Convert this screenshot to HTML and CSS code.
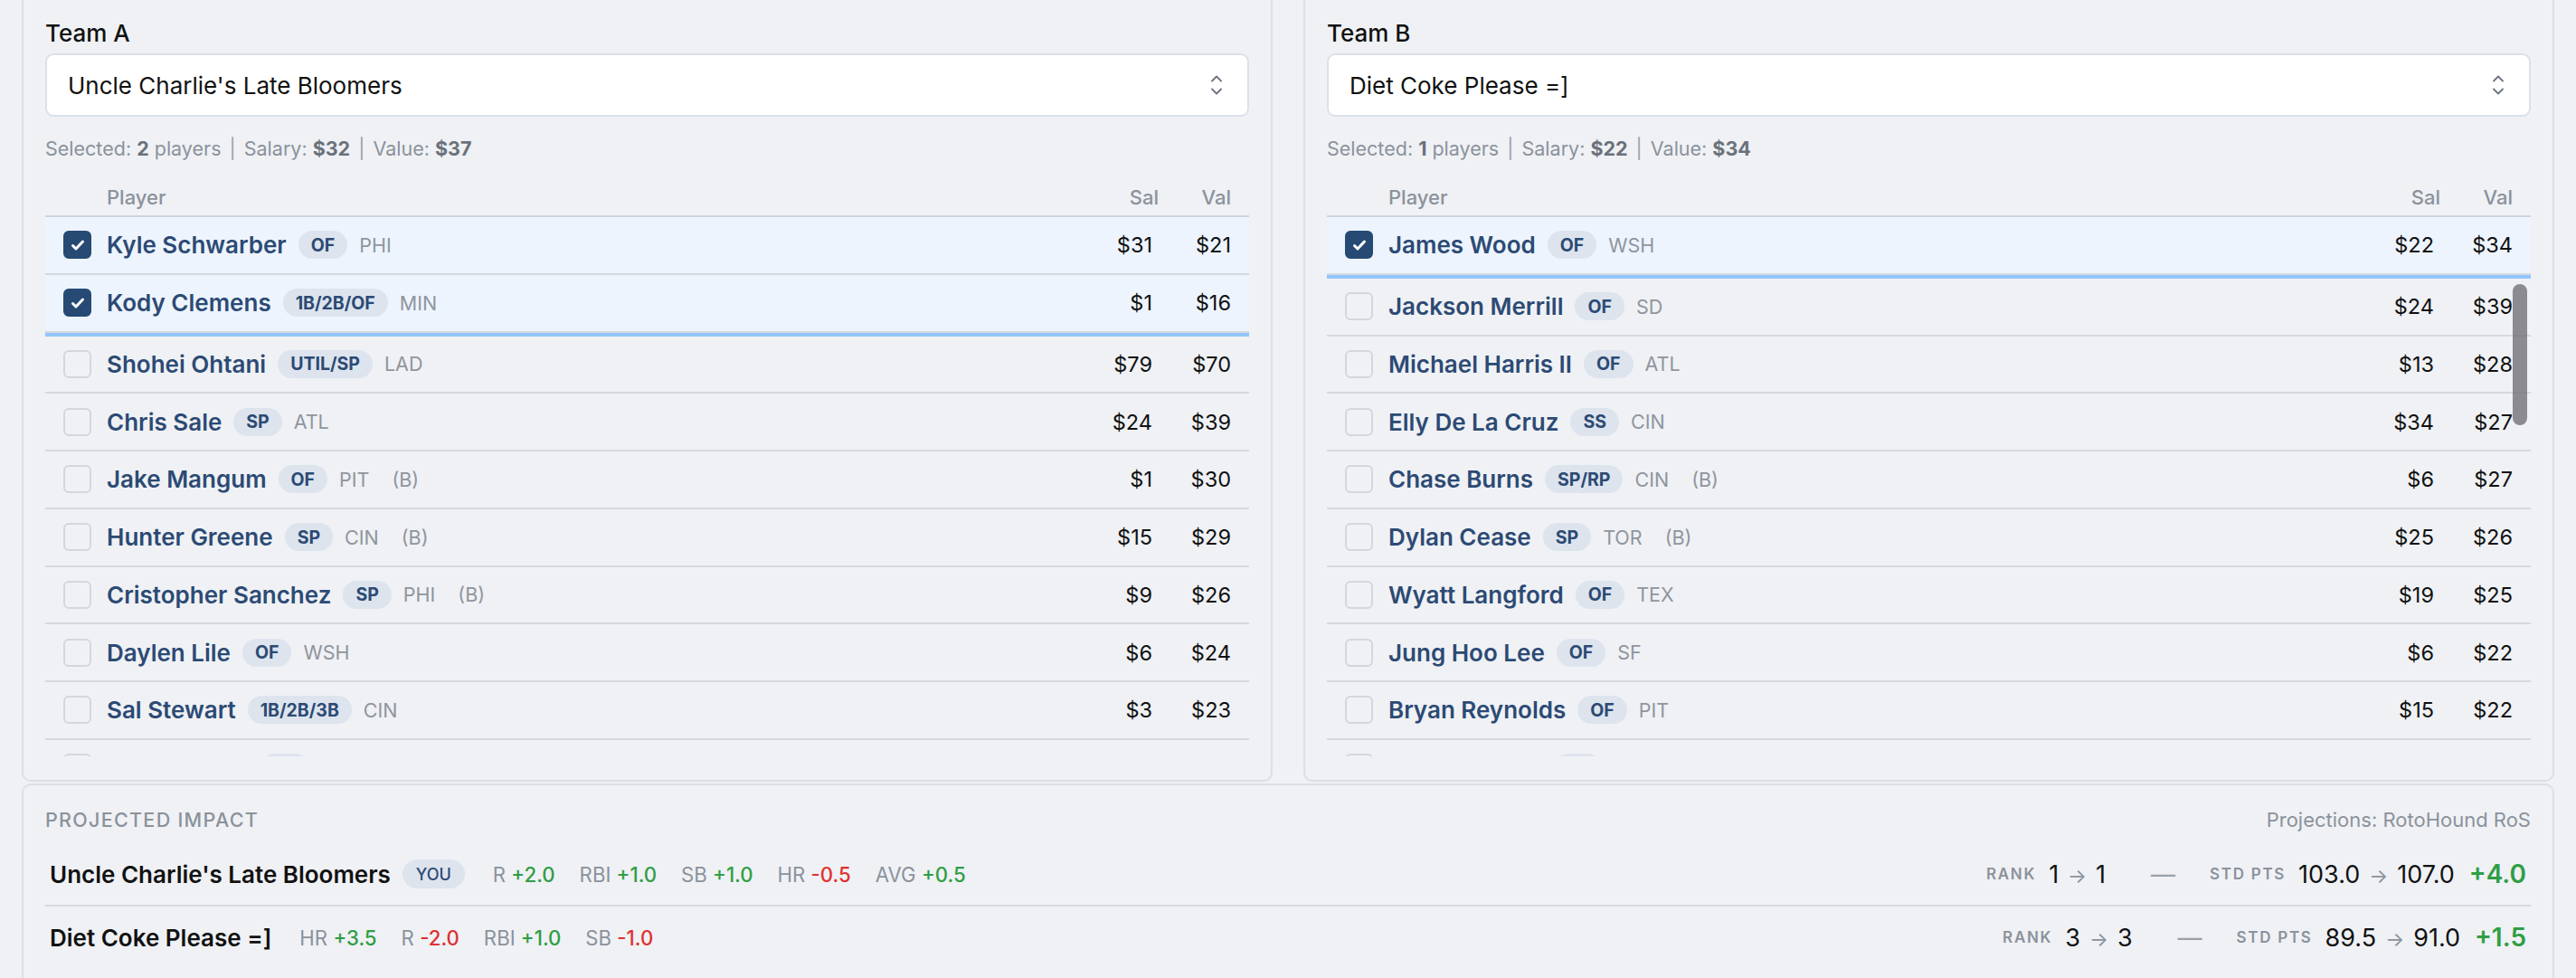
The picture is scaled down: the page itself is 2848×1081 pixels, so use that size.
FILE: index.html
```html
<!DOCTYPE html>
<html lang="en">
<head>
    <meta charset="UTF-8">
    <meta name="viewport" content="width=device-width, initial-scale=1.0">
    <title>Trade Analyzer</title>
    <link rel="stylesheet" href="styles.css">
</head>
<body>
<div class="page">
    <div class="teams">
        <!-- Team A -->
        <section class="team-card">
            <div class="team-label">Team A</div>
            <div class="team-select">
                <span>Uncle Charlie's Late Bloomers</span>
                <svg class="chev" width="12" height="22" viewBox="0 0 12 22"><path d="M1 6.5 6 1.5l5 5M1 15.5l5 5 5-5" fill="none" stroke="#6b7280" stroke-width="1.8" stroke-linecap="round" stroke-linejoin="round"/></svg>
            </div>
            <div class="summary">Selected: <b>2</b> players <span class="sep">|</span> Salary: <b>$32</b> <span class="sep">|</span> Value: <b>$37</b></div>
            <div class="roster">
                <div class="roster-head"><span class="h-player">Player</span><span class="h-sal">Sal</span><span class="h-val">Val</span></div>
                <div class="row picked">
                    <span class="check on"><svg width="20" height="20" viewBox="0 0 20 20"><path d="M4.5 10.5l3.5 3.5 7.5-8" fill="none" stroke="#fff" stroke-width="3" stroke-linecap="round" stroke-linejoin="round"/></svg></span>
                    <div class="player"><span class="name">Kyle Schwarber</span><span class="pos">OF</span><span class="team">PHI</span></div>
                    <span class="sal">$31</span><span class="val">$21</span>
                </div>
                <div class="row picked">
                    <span class="check on"><svg width="20" height="20" viewBox="0 0 20 20"><path d="M4.5 10.5l3.5 3.5 7.5-8" fill="none" stroke="#fff" stroke-width="3" stroke-linecap="round" stroke-linejoin="round"/></svg></span>
                    <div class="player"><span class="name">Kody Clemens</span><span class="pos">1B/2B/OF</span><span class="team">MIN</span></div>
                    <span class="sal">$1</span><span class="val">$16</span>
                </div>
                <div class="pin-line"></div>
                <div class="list">
                    <div class="row">
                        <span class="check"></span>
                        <div class="player"><span class="name">Shohei Ohtani</span><span class="pos">UTIL/SP</span><span class="team">LAD</span></div>
                        <span class="sal">$79</span><span class="val">$70</span>
                    </div>
                    <div class="row">
                        <span class="check"></span>
                        <div class="player"><span class="name">Chris Sale</span><span class="pos">SP</span><span class="team">ATL</span></div>
                        <span class="sal">$24</span><span class="val">$39</span>
                    </div>
                    <div class="row">
                        <span class="check"></span>
                        <div class="player"><span class="name">Jake Mangum</span><span class="pos">OF</span><span class="team">PIT</span><span class="bench">(B)</span></div>
                        <span class="sal">$1</span><span class="val">$30</span>
                    </div>
                    <div class="row">
                        <span class="check"></span>
                        <div class="player"><span class="name">Hunter Greene</span><span class="pos">SP</span><span class="team">CIN</span><span class="bench">(B)</span></div>
                        <span class="sal">$15</span><span class="val">$29</span>
                    </div>
                    <div class="row">
                        <span class="check"></span>
                        <div class="player"><span class="name">Cristopher Sanchez</span><span class="pos">SP</span><span class="team">PHI</span><span class="bench">(B)</span></div>
                        <span class="sal">$9</span><span class="val">$26</span>
                    </div>
                    <div class="row">
                        <span class="check"></span>
                        <div class="player"><span class="name">Daylen Lile</span><span class="pos">OF</span><span class="team">WSH</span></div>
                        <span class="sal">$6</span><span class="val">$24</span>
                    </div>
                    <div class="row">
                        <span class="check"></span>
                        <div class="player"><span class="name">Sal Stewart</span><span class="pos">1B/2B/3B</span><span class="team">CIN</span></div>
                        <span class="sal">$3</span><span class="val">$23</span>
                    </div>
                    <div class="row">
                        <span class="check"></span>
                        <div class="player"><span class="name">Logan Webb</span><span class="pos">SP</span><span class="team">SF</span></div>
                        <span class="sal">$12</span><span class="val">$21</span>
                    </div>
                </div>
            </div>
        </section>

        <!-- Team B -->
        <section class="team-card">
            <div class="team-label">Team B</div>
            <div class="team-select">
                <span>Diet Coke Please =]</span>
                <svg class="chev" width="12" height="22" viewBox="0 0 12 22"><path d="M1 6.5 6 1.5l5 5M1 15.5l5 5 5-5" fill="none" stroke="#6b7280" stroke-width="1.8" stroke-linecap="round" stroke-linejoin="round"/></svg>
            </div>
            <div class="summary">Selected: <b>1</b> players <span class="sep">|</span> Salary: <b>$22</b> <span class="sep">|</span> Value: <b>$34</b></div>
            <div class="roster">
                <div class="roster-head"><span class="h-player">Player</span><span class="h-sal">Sal</span><span class="h-val">Val</span></div>
                <div class="row picked">
                    <span class="check on"><svg width="20" height="20" viewBox="0 0 20 20"><path d="M4.5 10.5l3.5 3.5 7.5-8" fill="none" stroke="#fff" stroke-width="3" stroke-linecap="round" stroke-linejoin="round"/></svg></span>
                    <div class="player"><span class="name">James Wood</span><span class="pos">OF</span><span class="team">WSH</span></div>
                    <span class="sal">$22</span><span class="val">$34</span>
                </div>
                <div class="pin-line"></div>
                <div class="list">
                    <div class="row">
                        <span class="check"></span>
                        <div class="player"><span class="name">Jackson Merrill</span><span class="pos">OF</span><span class="team">SD</span></div>
                        <span class="sal">$24</span><span class="val">$39</span>
                    </div>
                    <div class="row">
                        <span class="check"></span>
                        <div class="player"><span class="name">Michael Harris II</span><span class="pos">OF</span><span class="team">ATL</span></div>
                        <span class="sal">$13</span><span class="val">$28</span>
                    </div>
                    <div class="row">
                        <span class="check"></span>
                        <div class="player"><span class="name">Elly De La Cruz</span><span class="pos">SS</span><span class="team">CIN</span></div>
                        <span class="sal">$34</span><span class="val">$27</span>
                    </div>
                    <div class="row">
                        <span class="check"></span>
                        <div class="player"><span class="name">Chase Burns</span><span class="pos">SP/RP</span><span class="team">CIN</span><span class="bench">(B)</span></div>
                        <span class="sal">$6</span><span class="val">$27</span>
                    </div>
                    <div class="row">
                        <span class="check"></span>
                        <div class="player"><span class="name">Dylan Cease</span><span class="pos">SP</span><span class="team">TOR</span><span class="bench">(B)</span></div>
                        <span class="sal">$25</span><span class="val">$26</span>
                    </div>
                    <div class="row">
                        <span class="check"></span>
                        <div class="player"><span class="name">Wyatt Langford</span><span class="pos">OF</span><span class="team">TEX</span></div>
                        <span class="sal">$19</span><span class="val">$25</span>
                    </div>
                    <div class="row">
                        <span class="check"></span>
                        <div class="player"><span class="name">Jung Hoo Lee</span><span class="pos">OF</span><span class="team">SF</span></div>
                        <span class="sal">$6</span><span class="val">$22</span>
                    </div>
                    <div class="row">
                        <span class="check"></span>
                        <div class="player"><span class="name">Bryan Reynolds</span><span class="pos">OF</span><span class="team">PIT</span></div>
                        <span class="sal">$15</span><span class="val">$22</span>
                    </div>
                    <div class="row">
                        <span class="check"></span>
                        <div class="player"><span class="name">Jacob Wilson</span><span class="pos">SS</span><span class="team">ATH</span></div>
                        <span class="sal">$14</span><span class="val">$21</span>
                    </div>
                </div>
                <div class="scroll-thumb"></div>
            </div>
        </section>
    </div>

    <section class="impact">
        <div class="impact-head">
            <span class="impact-title">Projected Impact</span>
            <span class="impact-source">Projections: RotoHound RoS</span>
        </div>
        <div class="impact-rows">
            <div class="impact-row">
                <span class="impact-name">Uncle Charlie's Late Bloomers</span>
                <span class="you">YOU</span>
                <div class="deltas">
                    <span class="stat">R <em class="up">+2.0</em></span>
                    <span class="stat">RBI <em class="up">+1.0</em></span>
                    <span class="stat">SB <em class="up">+1.0</em></span>
                    <span class="stat">HR <em class="down">-0.5</em></span>
                    <span class="stat">AVG <em class="up">+0.5</em></span>
                </div>
                <div class="standing">
                    <span class="tag">Rank</span>
                    <span class="num">1<span class="arrow">→</span>1</span>
                    <span class="dash">—</span>
                    <span class="tag">Std Pts</span>
                    <span class="num">103.0<span class="arrow">→</span>107.0</span>
                    <span class="gain">+4.0</span>
                </div>
            </div>
            <div class="impact-row">
                <span class="impact-name">Diet Coke Please =]</span>
                <div class="deltas">
                    <span class="stat">HR <em class="up">+3.5</em></span>
                    <span class="stat">R <em class="down">-2.0</em></span>
                    <span class="stat">RBI <em class="up">+1.0</em></span>
                    <span class="stat">SB <em class="down">-1.0</em></span>
                </div>
                <div class="standing">
                    <span class="tag">Rank</span>
                    <span class="num">3<span class="arrow">→</span>3</span>
                    <span class="dash">—</span>
                    <span class="tag">Std Pts</span>
                    <span class="num">89.5<span class="arrow">→</span>91.0</span>
                    <span class="gain">+1.5</span>
                </div>
            </div>
        </div>
    </section>
</div>
</body>
</html>
```

FILE: styles.css
```css
* {
    box-sizing: border-box;
}
body {
    margin: 0;
    background: #eff1f5;
    font-family: Inter, "Noto Sans", sans-serif;
    color: #111;
    overflow: hidden;
}
.page {
    padding: 0 24px;
}
.teams {
    display: grid;
    grid-template-columns: 1fr 1fr;
    column-gap: 34px;
}

/* team cards */
.team-card {
    height: 864px;
    border: 2px solid #dcdfe4;
    border-top: 0;
    border-radius: 0 0 10px 10px;
    padding: 22px 24px 26px;
    display: flex;
    flex-direction: column;
}
.team-label {
    font-size: 26px;
    line-height: 29px;
    font-weight: 500;
    margin-bottom: 8px;
}
.team-select {
    height: 70px;
    background: #fff;
    border: 2px solid #dbe1e8;
    border-radius: 9px;
    display: flex;
    align-items: center;
    justify-content: space-between;
    padding: 0 28px 0 23px;
    font-size: 26px;
}
.summary {
    margin-top: 22px;
    font-size: 21.5px;
    line-height: 26px;
    color: #8b929b;
}
.summary b {
    color: #6b717a;
    font-weight: 700;
}
.summary .sep {
    margin: 0 3px;
    color: #9aa0a8;
}

/* roster table */
.roster {
    flex: 1;
    min-height: 0;
    display: flex;
    flex-direction: column;
    position: relative;
}
.roster-head {
    display: flex;
    padding: 28px 0 6px;
    border-bottom: 2px solid #cfd4db;
    font-size: 22px;
    line-height: 27px;
    font-weight: 500;
    color: #8b929b;
}
.h-player {
    flex: 1;
    padding-left: 68px;
}
.h-sal {
    width: 110px;
    text-align: right;
}
.h-val {
    width: 100px;
    text-align: right;
    padding-right: 20px;
}
.row {
    display: flex;
    align-items: center;
    height: 63.75px;
    flex-shrink: 0;
    border-bottom: 2px solid #d5d9df;
}
.row.picked {
    background: #edf4fe;
}
.pin-line {
    height: 4px;
    flex-shrink: 0;
    background: #93c5fd;
}
.list {
    flex: 1;
    min-height: 0;
    overflow: hidden;
}
.check {
    width: 31px;
    height: 31px;
    margin: 0 17px 0 20px;
    border: 2px solid #d3d7dd;
    border-radius: 6px;
    display: flex;
    align-items: center;
    justify-content: center;
    flex-shrink: 0;
}
.check.on {
    background: #264a73;
    border-color: #264a73;
}
.player {
    flex: 1;
    display: flex;
    align-items: center;
    min-width: 0;
}
.name {
    font-size: 26px;
    font-weight: 600;
    color: #2c4a74;
}
.pos {
    margin-left: 13px;
    height: 31px;
    padding: 0 14px;
    border-radius: 16px;
    background: #dde4ee;
    color: #2c4a74;
    font-size: 19.5px;
    font-weight: 700;
    display: flex;
    align-items: center;
}
.team,
.bench {
    margin-left: 13px;
    color: #8f959d;
    font-size: 21.5px;
}
.bench {
    margin-left: 25px;
}
.sal,
.val {
    font-size: 23.5px;
    text-align: right;
}
.sal {
    width: 110px;
    padding-right: 7px;
}
.val {
    width: 100px;
    padding-right: 20px;
}
.scroll-thumb {
    position: absolute;
    right: 4px;
    top: 137px;
    width: 16px;
    height: 156px;
    border-radius: 8px;
    background: rgba(112, 112, 115, 0.78);
}

/* projected impact */
.impact {
    margin-top: 2px;
    height: 300px;
    border: 2px solid #dcdfe4;
    border-bottom: 0;
    border-radius: 10px 10px 0 0;
    padding: 25px 24px 0;
}
.impact-head {
    display: flex;
    justify-content: space-between;
    line-height: 26px;
    color: #8b929b;
}
.impact-title {
    font-size: 21.5px;
    font-weight: 500;
    letter-spacing: 0.06em;
    text-transform: uppercase;
}
.impact-source {
    font-size: 22px;
}
.impact-rows {
    margin-top: 13px;
}
.impact-row {
    display: flex;
    align-items: center;
    height: 68px;
    padding: 0 5px;
}
.impact-row + .impact-row {
    height: 70px;
    border-top: 2px solid #d5d9df;
}
.impact-name {
    font-size: 26px;
    font-weight: 600;
}
.you {
    margin-left: 13px;
    height: 32px;
    padding: 0 15px;
    border-radius: 16px;
    background: #dde4ee;
    color: #2c4a74;
    font-size: 18px;
    font-weight: 500;
    display: flex;
    align-items: center;
}
.deltas {
    display: flex;
    gap: 27px;
    margin-left: 31px;
    font-size: 22.2px;
    color: #8b929b;
}
.stat em {
    font-style: normal;
    font-weight: 500;
}
.up {
    color: #2f9e44;
}
.down {
    color: #e03131;
}
.standing {
    margin-left: auto;
    display: flex;
    align-items: center;
}
.tag {
    font-size: 17px;
    font-weight: 600;
    letter-spacing: 0.1em;
    text-transform: uppercase;
    color: #8b929b;
    margin-right: 14px;
}
.num {
    font-size: 27px;
}
.arrow {
    margin: 0 10px;
    font-size: 22px;
    color: #8b929b;
}
.dash {
    margin: 0 38px 0 50px;
    font-size: 27px;
    color: #9aa0a8;
}
.gain {
    margin-left: 16px;
    font-size: 28px;
    font-weight: 600;
    color: #2f9e44;
}
```
